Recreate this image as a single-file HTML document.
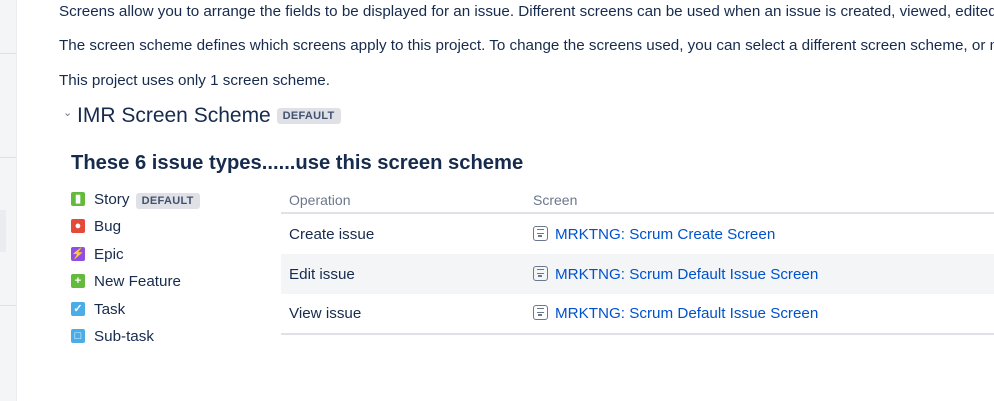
<!DOCTYPE html>
<html><head><style>
html,body{overflow:hidden}
body{margin:0;width:994px;height:401px;background:#fff;font-family:"Liberation Sans",sans-serif;color:#172b4d;font-size:14px;position:relative;overflow:hidden}
.a{position:absolute;white-space:nowrap}
.clip{position:absolute;left:0;top:0;width:994px;height:401px;overflow:hidden}
.side{position:absolute;left:0;top:0;width:16px;height:401px;background:#f4f5f7;border-right:1px solid #ebecf0}
.hl{position:absolute;left:0;height:1px;width:16px;background:#dfe1e6}
.lz{background:#dfe1e6;color:#42526e;font-size:11px;font-weight:bold;padding:2px 6px;border-radius:3px;letter-spacing:.3px}
.ic{position:absolute;left:71px;width:14px;height:14px;border-radius:2px;color:#fff;font-size:11px;line-height:14px;text-align:center;font-weight:bold}
.row{position:absolute;left:281px;width:713px;height:40px}
.scr{position:absolute;left:533px;color:#0052cc;font-size:15.2px;white-space:nowrap}
.si{display:inline-block;width:15px;height:15px;border:1.5px solid #6b778c;border-radius:3px;box-sizing:border-box;vertical-align:-2px;margin-right:7px;position:relative}
.si:before{content:"";position:absolute;left:3px;top:2px;width:7px;height:5px;border-top:1.5px solid #6b778c;border-bottom:1.5px solid #6b778c;box-sizing:border-box}
.si:after{content:"";position:absolute;left:4px;top:8px;width:4px;height:2px;background:#6b778c}
</style></head><body>
<div class="clip">
<div class="side"></div>
<div class="hl" style="top:53px"></div>
<div class="hl" style="top:157px"></div>
<div style="position:absolute;left:0;top:210px;width:6px;height:42px;background:#ebecf0"></div>
<div class="hl" style="top:305px"></div>
<div class="a" style="left:59px;top:3px;font-size:15.2px">Screens allow you to arrange the fields to be displayed for an issue. Different screens can be used when an issue is created, viewed, edited, or transitioned.</div>
<div class="a" style="left:59px;top:37px;font-size:15.2px">The screen scheme defines which screens apply to this project. To change the screens used, you can select a different screen scheme, or modify the currently selected scheme.</div>
<div class="a" style="left:59px;top:72px;font-size:15.2px">This project uses only 1 screen scheme.</div>
<div class="a" style="left:63px;top:106px;font-size:11px;color:#6b778c">&#8964;</div>
<div class="a" style="left:77px;top:104px;font-size:21px">IMR Screen Scheme <span class="lz" style="vertical-align:3px">DEFAULT</span></div>
<div class="a" style="left:71px;top:152px;font-size:20.2px;font-weight:bold">These 6 issue types......use this screen scheme</div>
<div class="ic" style="top:192px;background:#63ba3c">&#9646;</div>
<div class="ic" style="top:219px;background:#e5493a">&#9679;</div>
<div class="ic" style="top:247px;background:#904ee2">&#9889;</div>
<div class="ic" style="top:274px;background:#63ba3c">+</div>
<div class="ic" style="top:302px;background:#4bade8">&#10003;</div>
<div class="ic" style="top:329px;background:#4bade8">&#9633;</div>
<div class="a" style="left:94px;top:191px;font-size:15.2px">Story <span class="lz" style="margin-left:2px">DEFAULT</span></div>
<div class="a" style="left:94px;top:218px;font-size:15.2px">Bug</div>
<div class="a" style="left:94px;top:246px;font-size:15.2px">Epic</div>
<div class="a" style="left:94px;top:273px;font-size:15.2px">New Feature</div>
<div class="a" style="left:94px;top:301px;font-size:15.2px">Task</div>
<div class="a" style="left:94px;top:328px;font-size:15.2px">Sub-task</div>
<div class="a" style="left:289px;top:192px;font-size:14px;color:#6b778c">Operation</div>
<div class="a" style="left:533px;top:192px;font-size:14px;color:#6b778c">Screen</div>
<div style="position:absolute;left:281px;top:212px;width:713px;height:2px;background:#dfe1e6"></div>
<div class="row" style="top:254px;background:#f4f5f7"></div>
<div style="position:absolute;left:281px;top:333px;width:713px;height:2px;background:#dfe1e6"></div>
<div class="a" style="left:289px;top:226px;font-size:15.2px">Create issue</div>
<div class="a" style="left:289px;top:266px;font-size:15.2px">Edit issue</div>
<div class="a" style="left:289px;top:305px;font-size:15.2px">View issue</div>
<div class="scr" style="top:226px"><span class="si"></span>MRKTNG: Scrum Create Screen</div>
<div class="scr" style="top:266px"><span class="si"></span>MRKTNG: Scrum Default Issue Screen</div>
<div class="scr" style="top:305px"><span class="si"></span>MRKTNG: Scrum Default Issue Screen</div>
</div>
</body></html>
